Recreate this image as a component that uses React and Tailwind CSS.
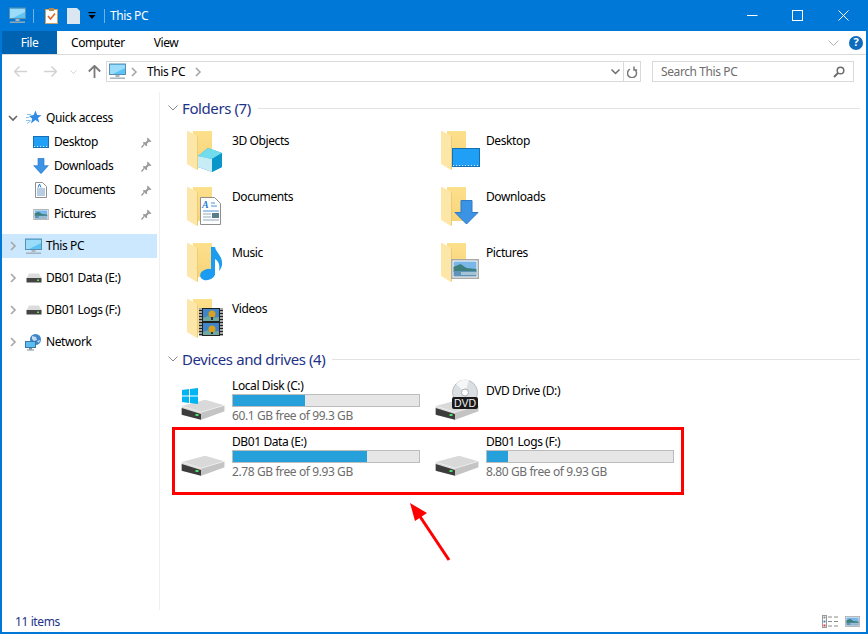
import React, { useId } from "react";

const Chevron = ({ open, className = "" }) => (
  <svg width="10" height="10" viewBox="0 0 10 10" className={className}>
    {open ? <path d="M1 3l4 4 4-4" fill="none" stroke="#666" strokeWidth="1.6" /> : <path d="M3 1l4 4-4 4" fill="none" stroke="#a6a6a6" strokeWidth="1.6" />}
  </svg>
);

const Monitor = ({ size = 17 }) => (
  <svg width={size} height={size} viewBox="0 0 17 17" className="shrink-0">
    <rect x="0.5" y="1" width="16" height="10.5" fill="#5cc3f5" stroke="#5a8fb0" />
    <path d="M1 2h15v3L4 11H1z" fill="#9adcfa" />
    <rect x="6.5" y="12" width="4" height="2" fill="#a9b6bf" />
    <rect x="1" y="14.5" width="15" height="1.4" fill="#9fadb6" />
  </svg>
);

const Pin = () => (
  <svg width="11" height="11" viewBox="0 0 11 11" className="shrink-0">
    <path d="M6.5 0.5l4 4-1.2.6-1.5-.3L6 6.7l.2 1.8-1 .8L1.8 6l.8-1 1.8.2 1.9-1.8-.3-1.5z" fill="#9a9a9a" />
    <path d="M3 7.5L0.5 10.5" stroke="#9a9a9a" strokeWidth="1.2" />
  </svg>
);

const Picture = ({ w = 16, h = 11 }) => (
  <svg width={w} height={h} viewBox="0 0 28 20" className="shrink-0">
    <rect x="0.75" y="0.75" width="26.5" height="18.5" fill="#fff" stroke="#a8a8a8" strokeWidth="1.5" />
    <rect x="2.5" y="2.5" width="23" height="8" fill="#7ab7e8" />
    <path d="M2.5 8l7-3 6 4 10 1v3h-23z" fill="#3d7f7c" />
    <rect x="2.5" y="12" width="23" height="5.5" fill="#5f93b8" />
    <rect x="10" y="13" width="15" height="3" fill="#a4c4d6" />
  </svg>
);

const DownArrow = ({ w = 17, h = 17 }) => (
  <svg width={w} height={h} viewBox="0 0 23 24" className="shrink-0">
    <path d="M7 0.5h9v11h6.5L11.5 23.5.5 11.5H7z" fill="#3b93e6" stroke="#3179c5" />
  </svg>
);

const DocIcon = () => (
  <svg width="12" height="16" viewBox="0 0 12 16" className="shrink-0">
    <path d="M.5.5h7l4 4v11H.5z" fill="#fff" stroke="#8f8f8f" />
    <path d="M2 7h8M2 9h8M2 11h8M2 13h8" stroke="#6d9ac4" />
    <path d="M3 5.5L4.5 2 6 5.5" fill="none" stroke="#2b7bd0" />
  </svg>
);

const SmallDrive = () => (
  <svg width="16" height="10" viewBox="0 0 16 10" className="shrink-0">
    <path d="M3 0.5h10l2.5 4.5h-15z" fill="#dcdcdc" />
    <rect x="0.5" y="5" width="15" height="4.5" fill="#444" />
    <rect x="11" y="6.5" width="2" height="1.5" fill="#5be05b" />
  </svg>
);

const NetworkIcon = () => (
  <svg width="17" height="17" viewBox="0 0 17 17" className="shrink-0">
    <circle cx="10.5" cy="5.5" r="5.5" fill="#3f86c9" />
    <path d="M7 2l4 1 1 3-3 1-2-2zM12 7l3-1-1 3z" fill="#c3dcef" />
    <rect x="0.5" y="7.5" width="10" height="6" fill="#5cbdf0" stroke="#3a78aa" />
    <rect x="4" y="14" width="3" height="1.5" fill="#7a8d9b" />
    <rect x="2" y="15.5" width="7" height="1" fill="#7a8d9b" />
  </svg>
);

const Star = () => (
  <svg width="16" height="16" viewBox="0 0 16 16" className="shrink-0">
    <path d="M9.5.5l1.6 4.4 4.4.3-3.500 2.800 1.200 4.500-3.800-2.600L5 13.500l1.200-4.800L3 6l4.600-.9z" fill="#2f8be6" />
    <path d="M1 4.500h4M0 7.500h3M0 10.500h4M1 13.500l4-3" stroke="#8dc4f2" strokeWidth="1" />
  </svg>
);

const NavRow = ({ icon, label, pin, indent, selected, expander }) => (
  <div className={`flex h-6 items-center ${selected ? "bg-[#cce8ff]" : ""}`}>
    {indent ? (
      <div className="flex w-[47px] shrink-0 justify-center pl-[31px]">{icon}</div>
    ) : (
      <>
        <div className="flex w-[23px] shrink-0 justify-start pl-[6px]">{expander}</div>
        <div className="flex w-[17px] shrink-0 justify-center">{icon}</div>
      </>
    )}
    <span className={`${indent ? "ml-[5px]" : "ml-[4px]"} flex-1`}>{label}</span>
    {pin && <span className="mr-[5px]"><Pin /></span>}
  </div>
);

const Folder = ({ children }) => {
  const id = useId();
  return (
    <svg width="48" height="48" viewBox="0 0 48 48" className="shrink-0">
      <defs>
        <linearGradient id={id} x1="0" y1="0" x2="0" y2="1">
          <stop offset="0" stopColor="#fde08c" />
          <stop offset="1" stopColor="#f7d47a" />
        </linearGradient>
      </defs>
      <rect x="9" y="4" width="19" height="34" fill={`url(#${id})`} />
      <path d="M3 4h1l9 5 0 34-10-6z" fill="#fce6a8" />
      <path d="M13 9v34l1-1V10z" fill="#eccb77" />
      {children}
    </svg>
  );
};

const overlays = {
  cube: (
    <g>
      <path d="M14 29l10-8 14 5v14l-10 5-14-5z" fill="#0fa5d6" />
      <path d="M14 29l10-8 14 5-10 6z" fill="#72dcec" />
      <path d="M14 29l14 3v13l-14-5z" fill="#c7ecf6" />
      <path d="M28 45l0-13 10-6v14z" fill="#0a96cb" />
    </g>
  ),
  doc: (
    <g>
      <path d="M16.500 14.500h14l6 6v21h-20z" fill="#fff" stroke="#8f8f8f" />
      <text x="18" y="25" fontSize="10" fontStyle="italic" fontWeight="700" fill="#2b7bd0" fontFamily="Liberation Serif, serif">A</text>
      <path d="M27 20h4M27 23h6M19 28h16" stroke="#4d93d8" />
      <path d="M19 31h8M19 34h8M19 37h16" stroke="#8fa8bc" />
      <rect x="28" y="30" width="7" height="5" fill="#5a7d8a" />
    </g>
  ),
  desk: (
    <g>
      <rect x="14.500" y="21.500" width="27" height="18" fill="#1f9ff5" stroke="#1470b0" />
      <path d="M15 38.500h26" stroke="#d8efff" strokeDasharray="1 2" />
    </g>
  ),
  down: <path d="M23 17.500h11v12h6L28.500 41 17 29.500h6z" fill="#3b93e6" stroke="#3179c5" />,
  music: (
    <g>
      <ellipse cx="23.500" cy="35.500" rx="7.500" ry="5.500" transform="rotate(-15 23.500 35.500)" fill="#1b9cf0" />
      <path d="M27 8h4c1 6 8 9 7 18-.5 3-2 5-3 6 1-5 0-10-4-12v16h-4z" fill="#1b9cf0" />
    </g>
  ),
  pic: (
    <g transform="translate(13 20)"><svg width="28" height="20" viewBox="0 0 28 20">
      <rect x="0.750" y="0.750" width="26.500" height="18.500" fill="#fff" stroke="#a8a8a8" strokeWidth="1.500" />
      <rect x="2.500" y="2.500" width="23" height="8" fill="#7ab7e8" />
      <path d="M2.500 8l7-3 6 4 10 1v3h-23z" fill="#3d7f7c" />
      <rect x="2.500" y="12" width="23" height="5.500" fill="#5f93b8" />
      <rect x="10" y="13" width="15" height="3" fill="#a4c4d6" />
    </svg></g>
  ),
  video: (
    <g>
      <rect x="15" y="13" width="24" height="28" fill="#222" />
      <path d="M16.500 13v28M37.500 13v28" stroke="#a8a8a8" strokeWidth="3" strokeDasharray="2 1" />
      <rect x="19" y="14" width="16" height="12" fill="#3f86c9" />
      <rect x="19" y="28" width="16" height="12" fill="#3f86c9" />
      <path d="M19 23l5-2 3 2 8-1v4H19zM19 37l5-2 3 2 8-1v4H19z" fill="#6fa8a0" />
      <circle cx="28" cy="19" r="3.500" fill="#d9a020" />
      <circle cx="28" cy="34" r="3.500" fill="#d9a020" />
      <path d="M28 22v3M28 37v2" stroke="#111" strokeWidth="1.500" />
    </g>
  ),
};

const FolderTile = ({ name, overlay }) => (
  <div className="flex h-14">
    <div className="pt-1"><Folder>{overlays[overlay]}</Folder></div>
    <div className="pt-[10px]">{name}</div>
  </div>
);

const Drive = ({ windows, dvd }) => (
  <svg width="48" height="48" viewBox="0 0 48 48" className="shrink-0">
    {dvd && (
      <g>
        <circle cx="31" cy="19.500" r="12.500" fill="#dcdfe2" stroke="#b8bcc0" />
        <path d="M31 19.500L22 11a12.500 12.500 0 0 1 13-4z" fill="#f4f6f7" />
        <circle cx="31" cy="19.500" r="3.500" fill="#fff" stroke="#a8acb0" />
      </g>
    )}
    <path d="M1.700 33L25 26.700l19.300 5.600v6L21 46.700 1.700 41.700z" fill="#d9d9d9" />
    <path d="M21 39.300l23.300-7v6L21 46.700z" fill="#c4c4c4" />
    <path d="M1.700 33L21 39.300l23.300-7" fill="none" stroke="#ededed" />
    <path d="M1.700 35L21 41v5.700L1.700 41.700z" fill="#3c3c3c" />
    <rect x="15.500" y="41" width="3" height="2" fill="#4de06a" />
    {windows && (
      <path d="M2 17l7-1v6.500H2zM10 15.900L18 15v7.500h-8zM2 23.500h7V30l-7-1zM10 23.500h8V31l-8-1z" fill="#00b4f1" />
    )}
    {dvd && (
      <g>
        <rect x="18" y="24" width="26" height="12" rx="2" fill="#1a1a1a" />
        <text x="31" y="34" fontSize="10.500" textAnchor="middle" letterSpacing="0" fill="#f0f0f0" fontFamily="Liberation Sans, sans-serif">DVD</text>
      </g>
    )}
  </svg>
);

const DriveTile = ({ name, free, pct, icon }) => (
  <div className="flex h-14">
    <div className="-ml-1 mr-1">{icon}</div>
    <div className="w-[188px]">
      <div className="flex h-[21px] items-end leading-[16px]"><span>{name}</span></div>
      <div className="h-[13px] border border-[#bcbcbc] bg-[#e6e6e6]">
        <div className="h-full bg-[#26a0da]" style={{ width: `${pct}%` }} />
      </div>
      <div className="mt-[1px] text-[#6d6d6d]">{free}</div>
    </div>
  </div>
);

const SectionHeader = ({ label, className = "" }) => (
  <div className={`flex h-5 items-center pr-[6px] ${className}`}>
    <svg width="10" height="6" viewBox="0 0 10 6" className="shrink-0"><path d="M0.500 0.500L5 5l4.500-4.500" fill="none" stroke="#8a8a8a" /></svg>
    <span className="ml-[4px] text-[15px] text-[#1e3287]">{label}</span>
    <div className="ml-[7px] h-px flex-1 bg-[#e2e2e2]" />
  </div>
);

export default function App() {
  return (
    <div className="flex h-[634px] w-[868px] flex-col overflow-hidden border-x-2 border-b-2 border-[#0078d7] bg-white font-['Noto_Sans',sans-serif] text-xs tracking-[-0.4px] text-black">
      <div className="-mx-[2px] flex h-[31px] shrink-0 items-center bg-[#0078d7] pl-[9px] text-white">
        <Monitor size={17} />
        <div className="ml-[7px] h-3.5 w-px bg-[#6fb2e6]" />
        <svg width="13" height="16" viewBox="0 0 13 16" className="ml-[11px] shrink-0">
          <rect x="0.500" y="1.500" width="12" height="14" fill="#fff" stroke="#c9a26a" />
          <rect x="4" y="0" width="5" height="3" fill="#b08a55" />
          <path d="M3 8l2.500 3L10 5.500" fill="none" stroke="#e0622a" strokeWidth="1.500" />
        </svg>
        <svg width="14" height="16" viewBox="0 0 14 16" className="ml-[9px] shrink-0"><path d="M0 0h10l3 3v13H0z" fill="#dbe6f3" /></svg>
        <svg width="8" height="8" viewBox="0 0 8 8" className="ml-[7px] shrink-0"><rect x="0.500" y="0" width="7" height="1.200" fill="#000" /><path d="M0.500 3h7L4 7z" fill="#000" /></svg>
        <div className="ml-[8px] h-3.5 w-px bg-[#6fb2e6]" />
        <span className="ml-[5px]">This PC</span>
        <div className="ml-auto flex items-center pr-[19px]">
          <svg width="11" height="11" viewBox="0 0 11 11"><path d="M0 5.500h10.500" stroke="#fff" /></svg>
          <svg width="11" height="11" viewBox="0 0 11 11" className="ml-[34px]"><rect x="0.500" y="0.500" width="10" height="10" fill="none" stroke="#fff" /></svg>
          <svg width="11" height="11" viewBox="0 0 11 11" className="ml-[35px]"><path d="M0.500 0.500l10 10M10.500 0.500l-10 10" stroke="#fff" /></svg>
        </div>
      </div>

      <div className="flex h-6 shrink-0 items-center border-b border-[#dadbdc]">
        <div className="flex h-full w-[55px] items-center justify-center bg-[#0063b1] text-white">File</div>
        <span className="ml-[14px]">Computer</span>
        <span className="ml-[29px]">View</span>
        <svg width="11" height="6" viewBox="0 0 11 6" className="ml-auto"><path d="M0.500 0.500l5 5 5-5" fill="none" stroke="#b0b0b0" /></svg>
        <div className="ml-[10px] mr-[3px] flex h-3.5 w-3.5 items-center justify-center rounded-full bg-[#0f6cbd] text-[11px] font-bold text-white">?</div>
      </div>

      <div className="flex h-[37px] shrink-0 items-start pt-[6px]">
        <div className="flex h-[21px] items-center pl-[12px]">
          <svg width="13" height="11" viewBox="0 0 13 11"><path d="M5.500 0.500l-5 5 5 5M0.500 5.500H13" fill="none" stroke="#d2d2d2" strokeWidth="1.500" /></svg>
          <svg width="13" height="11" viewBox="0 0 13 11" className="ml-[17px]"><path d="M7.500 0.500l5 5-5 5M12.500 5.500H0" fill="none" stroke="#d2d2d2" strokeWidth="1.500" /></svg>
          <svg width="7" height="4" viewBox="0 0 7 4" className="ml-[13px]"><path d="M0.500 0.500l3 3 3-3" fill="none" stroke="#d2d2d2" /></svg>
          <svg width="13" height="13" viewBox="0 0 13 13" className="ml-[11px]"><path d="M0.800 6.500l5.700-5.700 5.700 5.700M6.500 1v12" fill="none" stroke="#7a7a7a" strokeWidth="1.800" /></svg>
        </div>
        <div className="ml-[5px] flex h-[21px] w-[535px] items-center border border-[#d9d9d9] pl-[2px]">
          <Monitor size={17} />
          <Chevron className="ml-[3px]" />
          <span className="ml-[8px]">This PC</span>
          <Chevron className="ml-[8px]" />
          <div className="ml-auto flex h-full items-center">
            <svg width="9" height="6" viewBox="0 0 9 6"><path d="M0.500 0.500l4 4 4-4" fill="none" stroke="#6d6d6d" strokeWidth="1.500" /></svg>
            <div className="ml-[3px] flex h-full w-[17px] items-center justify-center border-l border-[#d9d9d9]">
              <svg width="11" height="12" viewBox="0 0 11 12"><path d="M3 3.200a4.500 4.500 0 1 0 4 0M7 0.500v3.500h3.200" fill="none" stroke="#7a7a7a" strokeWidth="1.500" /></svg>
            </div>
          </div>
        </div>
        <div className="ml-[11px] flex h-[21px] w-[202px] items-center border border-[#d9d9d9] pl-2 pr-[8px] text-[#6d6d6d]">
          <span>Search This PC</span>
          <svg width="12" height="12" viewBox="0 0 12 12" className="ml-auto"><circle cx="7.500" cy="4.500" r="3.300" fill="none" stroke="#6d6d6d" strokeWidth="1.500" /><path d="M5 7L1 11" stroke="#6d6d6d" strokeWidth="2" /></svg>
        </div>
      </div>

      <div className="flex min-h-0 flex-1">
        <nav className="w-[158px] shrink-0 border-r border-[#f0f0f0] pt-[14px]">
          <div className="w-[155px]">
            <NavRow expander={<Chevron open />} icon={<Star />} label="Quick access" />
            <NavRow indent pin icon={<svg width="16" height="12" viewBox="0 0 16 12" className="shrink-0"><rect x="0.500" y="0.500" width="15" height="11" fill="#1f9ff5" stroke="#1470b0" /><path d="M1 10.500h14" stroke="#d8efff" strokeDasharray="1 2" /></svg>} label="Desktop" />
            <NavRow indent pin icon={<DownArrow w={16} h={16} />} label="Downloads" />
            <NavRow indent pin icon={<DocIcon />} label="Documents" />
            <NavRow indent pin icon={<Picture w={16} h={11} />} label="Pictures" />
            <div className="mt-2 flex flex-col gap-2">
              <NavRow selected expander={<Chevron />} icon={<Monitor />} label="This PC" />
              <NavRow expander={<Chevron />} icon={<SmallDrive />} label="DB01 Data (E:)" />
              <NavRow expander={<Chevron />} icon={<SmallDrive />} label="DB01 Logs (F:)" />
              <NavRow expander={<Chevron />} icon={<NetworkIcon />} label="Network" />
            </div>
          </div>
        </nav>
        <main className="relative min-w-0 flex-1 pl-[8px] pt-[6px]">
          <SectionHeader label="Folders (7)" />
          <div className="mt-[5px] grid grid-cols-[254px_254px] pl-[16px]">
            <FolderTile name="3D Objects" overlay="cube" />
            <FolderTile name="Desktop" overlay="desk" />
            <FolderTile name="Documents" overlay="doc" />
            <FolderTile name="Downloads" overlay="down" />
            <FolderTile name="Music" overlay="music" />
            <FolderTile name="Pictures" overlay="pic" />
            <FolderTile name="Videos" overlay="video" />
          </div>
          <SectionHeader label="Devices and drives (4)" className="mt-[2px]" />
          <div className="mt-[4px] grid grid-cols-[254px_254px] pl-[16px]">
            <DriveTile name="Local Disk (C:)" free="60.1 GB free of 99.3 GB" pct={38.5} icon={<Drive windows />} />
            <div className="flex h-14">
              <div className="-ml-1 mr-1"><Drive dvd /></div>
              <div className="pt-[10px]">DVD Drive (D:)</div>
            </div>
            <DriveTile name="DB01 Data (E:)" free="2.78 GB free of 9.93 GB" pct={72} icon={<Drive />} />
            <DriveTile name="DB01 Logs (F:)" free="8.80 GB free of 9.93 GB" pct={11.300} icon={<Drive />} />
          </div>
          <div className="absolute left-[12px] top-[335px] h-[68px] w-[512px] border-[3px] border-[#ff0000]" />
          <svg width="50" height="68" viewBox="0 0 50 68" className="absolute left-[248px] top-[408px]">
            <path d="M41 60L9 12" stroke="#ff0000" strokeWidth="3" />
            <path d="M2 3l5 18 12-8z" fill="#ff0000" />
          </svg>
        </main>
      </div>

      <div className="flex h-[22px] shrink-0 items-center pl-[13px] pr-[6px] pt-[2px] text-[#1e3287]">
        <span>11 items</span>
        <svg width="17" height="13" viewBox="0 0 17 13" className="ml-auto -mt-[2px]">
          <rect x="0.500" y="0.500" width="4" height="12" fill="#fff" stroke="#9a9a9a" />
          <rect x="1.500" y="1.500" width="2" height="2" fill="#8a8a8a" />
          <rect x="1.500" y="5.500" width="2" height="2" fill="#3f86c9" />
          <rect x="1.500" y="9.500" width="2" height="2" fill="#d43a3a" />
          <path d="M6 2h4M12 2h4M6 6.500h4M12 6.500h4M6 11h4M12 11h4" stroke="#8a8a8a" />
        </svg>
        <span className="ml-[6px] -mt-[2px]"><Picture w={15} h={11} /></span>
      </div>
    </div>
  );
}
